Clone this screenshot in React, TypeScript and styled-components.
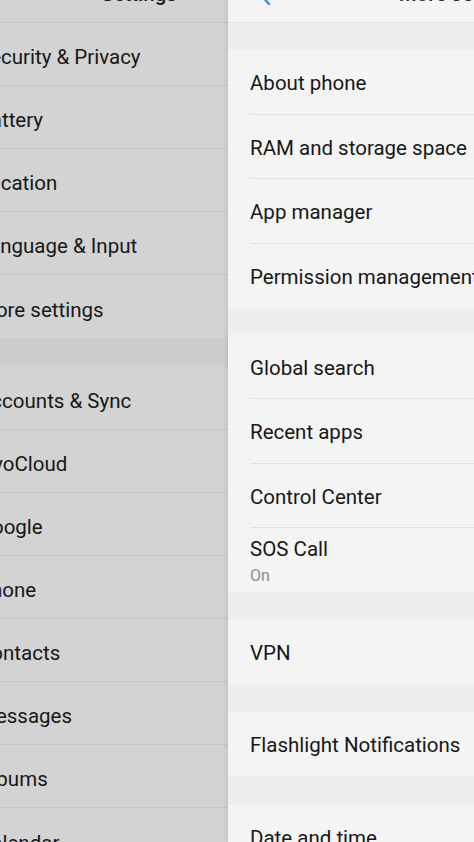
import styled, { createGlobalStyle } from "styled-components";

const GlobalStyle = createGlobalStyle`
  html, body {
    margin: 0;
    padding: 0;
    overflow: hidden;
    background: #f4f4f4;
  }
  body {
    font-family: Roboto, "Liberation Sans", sans-serif;
  }
`;

const Viewport = styled.div`
  display: flex;
  width: 474px;
  height: 842px;
  overflow: hidden;
`;

const LeftScreen = styled.div`
  flex: none;
  width: 228px;
  height: 100%;
  overflow: hidden;
  background: #d3d3d3;
`;

const LeftInner = styled.div`
  width: 474px;
  margin-left: -98px;
  margin-top: -33px;
`;

const RightScreen = styled.div`
  flex: none;
  width: 474px;
  height: 100%;
  background: #f4f4f4;
  box-shadow: -2px 0 4px rgba(0, 0, 0, 0.08);
  position: relative;
  z-index: 1;
`;

const RightInner = styled.div`
  margin-top: -33px;
`;

const Header = styled.header<{ $dim?: boolean }>`
  height: 56px;
  display: grid;
  grid-template-columns: 1fr auto 1fr;
  align-items: center;
  border-bottom: 1px solid ${(p) => (p.$dim ? "#c4c4c4" : "#e4e4e4")};
  background: ${(p) => (p.$dim ? "#d3d3d3" : "#f4f4f4")};
  box-sizing: border-box;
`;

const Title = styled.h1<{ $dim?: boolean }>`
  margin: ${(p) => (p.$dim ? "0 0 2px" : "0 6px 2px 0")};
  font-size: 20.5px;
  font-weight: 500;
  color: ${(p) => (p.$dim ? "#1c1c1c" : "#2a2a2a")};
`;

const Back = styled.div`
  padding-left: 30px;
  display: flex;
  align-items: center;
`;

const Gap = styled.div<{ $dim?: boolean; $h?: number }>`
  height: ${(p) => p.$h ?? 27}px;
  background: ${(p) => (p.$dim ? "#cdcdcd" : "#eeeeee")};
`;

const Group = styled.section<{ $dim?: boolean }>`
  background: ${(p) => (p.$dim ? "#d3d3d3" : "#f4f4f4")};
`;

const Row = styled.div<{ $dim?: boolean; $h: number }>`
  height: ${(p) => p.$h}px;
  padding-left: ${(p) => (p.$dim ? 76 : 22)}px;
  box-sizing: border-box;
`;

const RowBody = styled.div<{ $dim?: boolean; $last?: boolean }>`
  height: 100%;
  display: flex;
  flex-direction: column;
  justify-content: center;
  white-space: nowrap;
  box-sizing: border-box;
  padding-top: ${(p) => (p.$dim ? 6 : 3)}px;
  border-bottom: ${(p) =>
    p.$last ? "none" : `1px solid ${p.$dim ? "#c6c6c6" : "#e1e1e1"}`};
`;

const Label = styled.span`
  font-size: 20.5px;
  color: #171717;
  line-height: 26px;
`;

const Sub = styled.span`
  font-size: 16px;
  color: #8c8c8c;
  line-height: 22px;
  margin-top: 3px;
`;

type Item = { label: string; sub?: string };

const SettingsGroup = ({
  items,
  dim,
  h,
}: {
  items: Item[];
  dim?: boolean;
  h: number;
}) => (
  <Group $dim={dim}>
    {items.map((it, i) => (
      <Row key={it.label} $dim={dim} $h={h}>
        <RowBody $dim={dim} $last={i === items.length - 1}>
          <Label>{it.label}</Label>
          {it.sub && <Sub>{it.sub}</Sub>}
        </RowBody>
      </Row>
    ))}
  </Group>
);

const leftTop: Item[] = [
  { label: "Security & Privacy" },
  { label: "Battery" },
  { label: "Location" },
  { label: "Language & Input" },
  { label: "More settings" },
];

const leftBottom: Item[] = [
  { label: "Accounts & Sync" },
  { label: "vivoCloud" },
  { label: "Google" },
  { label: "Phone" },
  { label: "Contacts" },
  { label: "Messages" },
  { label: "Albums" },
  { label: "Calendar" },
];

const App = () => {
  return (
    <>
      <GlobalStyle />
      <Viewport>
        <LeftScreen>
          <LeftInner>
            <Header $dim>
              <span />
              <Title $dim>Settings</Title>
              <span />
            </Header>
            <SettingsGroup dim h={63} items={leftTop} />
            <Gap $dim $h={29} />
            <SettingsGroup dim h={63} items={leftBottom} />
          </LeftInner>
        </LeftScreen>
        <RightScreen>
          <RightInner>
            <Header>
              <Back>
                <svg width="14" height="22" viewBox="0 0 14 22">
                  <path
                    d="M11 2 L3 11 L11 20"
                    fill="none"
                    stroke="#3a8ee6"
                    strokeWidth="2.4"
                    strokeLinecap="round"
                    strokeLinejoin="round"
                  />
                </svg>
              </Back>
              <Title>More settings</Title>
              <span />
            </Header>
            <Gap />
            <SettingsGroup
              h={64.5}
              items={[
                { label: "About phone" },
                { label: "RAM and storage space" },
                { label: "App manager" },
                { label: "Permission management" },
              ]}
            />
            <Gap />
            <SettingsGroup
              h={64.3}
              items={[
                { label: "Global search" },
                { label: "Recent apps" },
                { label: "Control Center" },
                { label: "SOS Call", sub: "On" },
              ]}
            />
            <Gap $h={28} />
            <SettingsGroup h={63.5} items={[{ label: "VPN" }]} />
            <Gap $h={28} />
            <SettingsGroup h={64} items={[{ label: "Flashlight Notifications" }]} />
            <Gap $h={29} />
            <SettingsGroup h={64} items={[{ label: "Date and time" }]} />
          </RightInner>
        </RightScreen>
      </Viewport>
    </>
  );
};

export default App;
